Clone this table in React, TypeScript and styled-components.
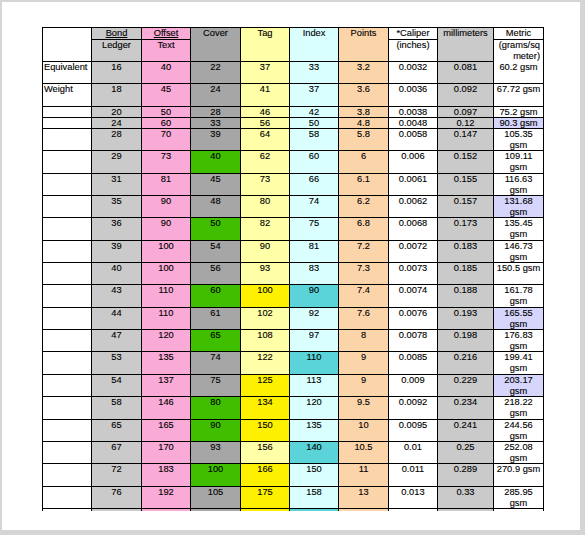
import React from 'react';
import styled, { createGlobalStyle } from 'styled-components';

const GlobalStyle = createGlobalStyle`
  html, body {
    margin: 0;
    padding: 0;
    background: #ffffff;
  }
  body {
    font-family: 'Liberation Sans', Arial, sans-serif;
  }
`;

// cell colours, read off the sheet
const colors = {
  white: '#ffffff',
  bond: '#cacaca',
  offset: '#f9aad6',
  cover: '#a6a6a6',
  green: '#40bf00',
  tag: '#ffffa8',
  yellow: '#fdf100',
  index: '#d9ffff',
  teal: '#5ad4d8',
  points: '#fcd4aa',
  mm: '#cacaca',
  lavender: '#d6d6fc',
};

const widths = [48, 49, 48, 49, 48, 48, 49, 48, 55, 49];
const baseColors = [
  colors.white,
  colors.bond,
  colors.offset,
  colors.cover,
  colors.tag,
  colors.index,
  colors.points,
  colors.white,
  colors.mm,
  colors.white,
];

interface DataRow {
  label?: string;
  h: number;
  values: string[];
  hi?: Record<number, string>;
}

const rows: DataRow[] = [
  { label: 'Equivalent', h: 21, values: ['16', '40', '22', '37', '33', '3.2', '0.0032', '0.081', '60.2 gsm'] },
  { label: 'Weight', h: 22, values: ['18', '45', '24', '41', '37', '3.6', '0.0036', '0.092', '67.72 gsm'] },
  { h: 10, values: ['20', '50', '28', '46', '42', '3.8', '0.0038', '0.097', '75.2 gsm'] },
  { h: 10, values: ['24', '60', '33', '56', '50', '4.8', '0.0048', '0.12', '90.3 gsm'], hi: { 8: colors.lavender } },
  { h: 21, values: ['28', '70', '39', '64', '58', '5.8', '0.0058', '0.147', '105.35 gsm'] },
  { h: 22, values: ['29', '73', '40', '62', '60', '6', '0.006', '0.152', '109.11 gsm'], hi: { 2: colors.green } },
  { h: 21, values: ['31', '81', '45', '73', '66', '6.1', '0.0061', '0.155', '116.63 gsm'] },
  { h: 21, values: ['35', '90', '48', '80', '74', '6.2', '0.0062', '0.157', '131.68 gsm'], hi: { 8: colors.lavender } },
  { h: 22, values: ['36', '90', '50', '82', '75', '6.8', '0.0068', '0.173', '135.45 gsm'], hi: { 2: colors.green } },
  { h: 21, values: ['39', '100', '54', '90', '81', '7.2', '0.0072', '0.183', '146.73 gsm'] },
  { h: 21, values: ['40', '100', '56', '93', '83', '7.3', '0.0073', '0.185', '150.5 gsm'] },
  {
    h: 22,
    values: ['43', '110', '60', '100', '90', '7.4', '0.0074', '0.188', '161.78 gsm'],
    hi: { 2: colors.green, 3: colors.yellow, 4: colors.teal },
  },
  { h: 21, values: ['44', '110', '61', '102', '92', '7.6', '0.0076', '0.193', '165.55 gsm'], hi: { 8: colors.lavender } },
  { h: 21, values: ['47', '120', '65', '108', '97', '8', '0.0078', '0.198', '176.83 gsm'], hi: { 2: colors.green } },
  { h: 22, values: ['53', '135', '74', '122', '110', '9', '0.0085', '0.216', '199.41 gsm'], hi: { 4: colors.teal } },
  {
    h: 21,
    values: ['54', '137', '75', '125', '113', '9', '0.009', '0.229', '203.17 gsm'],
    hi: { 3: colors.yellow, 8: colors.lavender },
  },
  { h: 22, values: ['58', '146', '80', '134', '120', '9.5', '0.0092', '0.234', '218.22 gsm'], hi: { 2: colors.green, 3: colors.yellow } },
  { h: 21, values: ['65', '165', '90', '150', '135', '10', '0.0095', '0.241', '244.56 gsm'], hi: { 2: colors.green, 3: colors.yellow } },
  { h: 21, values: ['67', '170', '93', '156', '140', '10.5', '0.01', '0.25', '252.08 gsm'], hi: { 4: colors.teal } },
  { h: 22, values: ['72', '183', '100', '166', '150', '11', '0.011', '0.289', '270.9 gsm'], hi: { 2: colors.green, 3: colors.yellow } },
  { h: 21, values: ['76', '192', '105', '175', '158', '13', '0.013', '0.33', '285.95 gsm'], hi: { 3: colors.yellow } },
  // the sheet runs on past the bottom of the page; only the tops of this row show
  { h: 21, values: ['80', '203', '111', '185', '170', '14', '0.014', '0.356', '301.06 gsm'], hi: { 3: colors.yellow, 4: colors.teal } },
];

const Frame = styled.div`
  width: 585px;
  height: 535px;
  box-sizing: border-box;
  padding: 2px 5px 5px 2px;
  background: #d5d5d5;
`;

const Page = styled.div`
  height: 100%;
  background: #ffffff;
  padding: 25px 0 0 40px;
  box-sizing: border-box;
`;

const Clip = styled.div`
  width: 502px;
  height: 484px;
  overflow: hidden;
`;

const Table = styled.div`
  display: flex;
  flex-direction: column;
  gap: 1px;
  padding: 1px;
  background: #000000;
  font-size: 9.3px;
  line-height: 11px;
  color: #000000;
  -webkit-text-stroke: 0.12px #000000;
`;

const Row = styled.div<{ $h: number }>`
  display: flex;
  gap: 1px;
  height: ${(p) => p.$h}px;
  flex: none;
`;

const Cell = styled.div<{ $w: number; $bg: string; $align?: 'left' | 'center' | 'right' }>`
  width: ${(p) => p.$w}px;
  flex: none;
  box-sizing: border-box;
  background: ${(p) => p.$bg};
  text-align: ${(p) => p.$align ?? 'center'};
  padding: ${(p) => (p.$align === 'right' ? '0 3px 0 1px' : '0 1px')};
  white-space: normal;
`;

const Split = styled.div<{ $w: number }>`
  width: ${(p) => p.$w}px;
  flex: none;
  display: flex;
  flex-direction: column;
  gap: 1px;
`;

const SplitTop = styled(Cell)`
  height: 11px;
  flex: none;
  width: 100%;
`;

const SplitBottom = styled(Cell)`
  flex: 1;
  width: 100%;
`;

const Under = styled.span`
  text-decoration: underline;
  text-underline-offset: 1px;
`;

const HeaderRow: React.FC = () => (
  <Row $h={33}>
    <Cell $w={widths[0]} $bg={colors.white} />
    <Split $w={widths[1]}>
      <SplitTop $w={widths[1]} $bg={colors.bond}>
        <Under>Bond</Under>
      </SplitTop>
      <SplitBottom $w={widths[1]} $bg={colors.bond}>Ledger</SplitBottom>
    </Split>
    <Split $w={widths[2]}>
      <SplitTop $w={widths[2]} $bg={colors.offset}>
        <Under>Offset</Under>
      </SplitTop>
      <SplitBottom $w={widths[2]} $bg={colors.offset}>Text</SplitBottom>
    </Split>
    <Cell $w={widths[3]} $bg={colors.cover}>Cover</Cell>
    <Cell $w={widths[4]} $bg={colors.tag}>Tag</Cell>
    <Cell $w={widths[5]} $bg={colors.index}>Index</Cell>
    <Cell $w={widths[6]} $bg={colors.points}>Points</Cell>
    <Split $w={widths[7]}>
      <SplitTop $w={widths[7]} $bg={colors.white}>*Caliper</SplitTop>
      <SplitBottom $w={widths[7]} $bg={colors.white}>(inches)</SplitBottom>
    </Split>
    <Cell $w={widths[8]} $bg={colors.mm}>millimeters</Cell>
    <Split $w={widths[9]}>
      <SplitTop $w={widths[9]} $bg={colors.white}>Metric</SplitTop>
      <SplitBottom $w={widths[9]} $bg={colors.white} $align="right">
        (grams/sq meter)
      </SplitBottom>
    </Split>
  </Row>
);

const App: React.FC = () => {
  return (
    <>
      <GlobalStyle />
      <Frame>
        <Page>
          <Clip>
            <Table>
              <HeaderRow />
              {rows.map((row, i) => (
                <Row key={i} $h={row.h}>
                  <Cell $w={widths[0]} $bg={colors.white} $align="left">
                    {row.label}
                  </Cell>
                  {row.values.map((v, j) => (
                    <Cell key={j} $w={widths[j + 1]} $bg={row.hi?.[j] ?? baseColors[j + 1]}>
                      {v}
                    </Cell>
                  ))}
                </Row>
              ))}
            </Table>
          </Clip>
        </Page>
      </Frame>
    </>
  );
};

export default App;
